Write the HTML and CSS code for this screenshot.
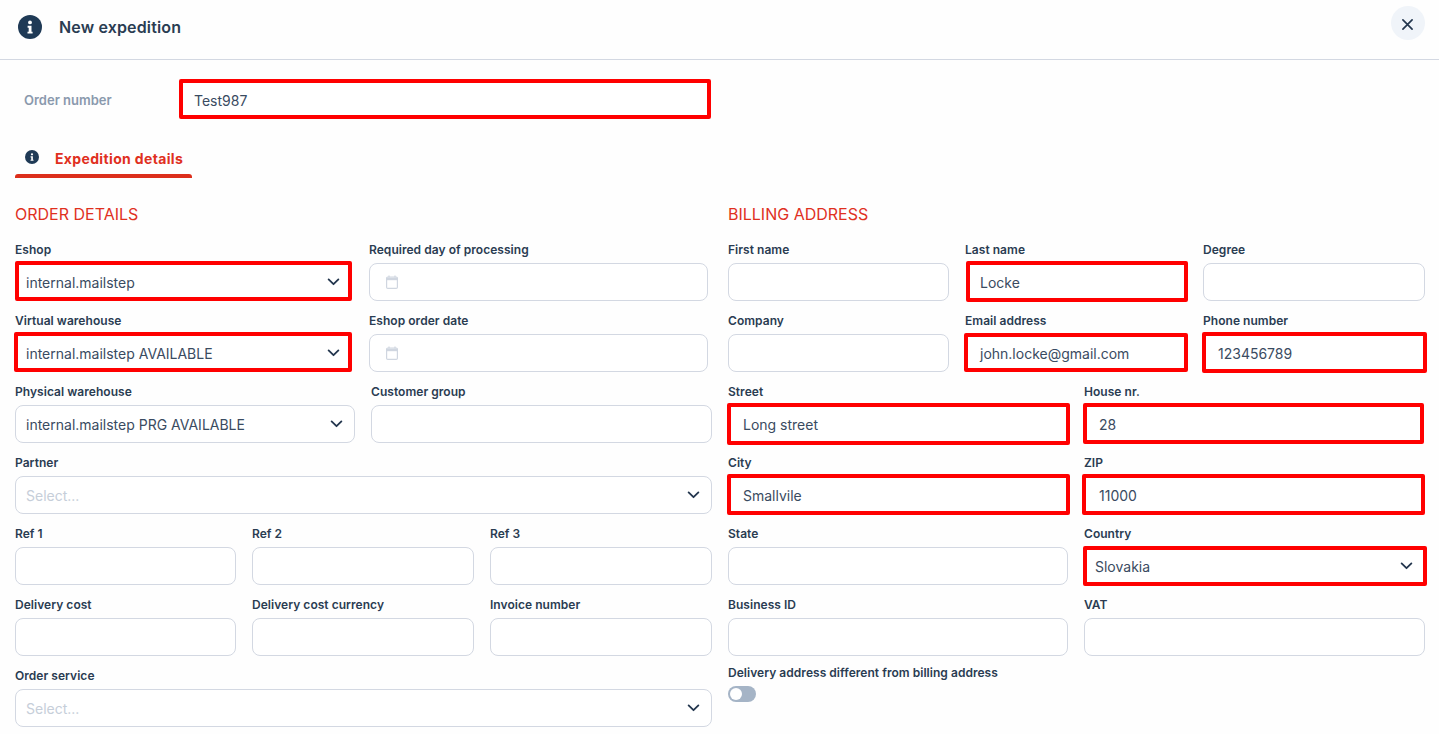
FILE: index.html
```html
<!DOCTYPE html>
<html lang="en">
<head>
    <meta charset="UTF-8">
    <meta name="viewport" content="width=device-width, initial-scale=1.0">
    <title>New expedition</title>
    <link rel="stylesheet" href="styles.css">
</head>
<body>

    <svg class="icon-defs" width="0" height="0" aria-hidden="true">
        <symbol id="chevron" viewBox="0 0 14 9">
            <path d="M1.5 1.5 7 7l5.5-5.5" fill="none" stroke="currentColor" stroke-width="2" stroke-linecap="round" stroke-linejoin="round"/>
        </symbol>
        <symbol id="calendar" viewBox="0 0 12 14">
            <path d="M3 .5v2M9 .5v2" fill="none" stroke="currentColor" stroke-width="1.2"/>
            <rect x=".6" y="2" width="10.8" height="11.4" rx="1.2" fill="none" stroke="currentColor" stroke-width="1.2"/>
            <path d="M.6 2.6h10.8v2.6H.6z" fill="currentColor"/>
        </symbol>
        <symbol id="info" viewBox="0 0 24 24">
            <circle cx="12" cy="12" r="12" fill="currentColor"/>
            <circle cx="12" cy="7.4" r="1.9" fill="#fff"/>
            <path d="M9.6 10.8h3.9v5.9h1.1v1.9H9.5v-1.9h1.2v-4H9.6z" fill="#fff"/>
        </symbol>
    </svg>

    <header class="modal-header">
        <svg class="header-icon"><use href="#info"/></svg>
        <h1>New expedition</h1>
        <button class="btn-close" type="button" aria-label="Close">
            <svg viewBox="0 0 12 12" width="11" height="11"><path d="M1 1l10 10M11 1 1 11" fill="none" stroke="currentColor" stroke-width="1.8" stroke-linecap="round"/></svg>
        </button>
    </header>

    <main class="modal-body">
        <div class="order-number">
            <label>Order number</label>
            <div class="field marked mark-order">Test987</div>
        </div>

        <nav class="tabs">
            <a class="tab">
                <svg class="tab-icon"><use href="#info"/></svg>
                Expedition details
            </a>
        </nav>

        <div class="columns">
            <section class="column">
                <h2>ORDER DETAILS</h2>

                <div class="row row-narrow">
                    <div class="group">
                        <label>Eshop</label>
                        <div class="field select marked mark-eshop">internal.mailstep <svg class="chevron"><use href="#chevron"/></svg></div>
                    </div>
                    <div class="group">
                        <label>Required day of processing</label>
                        <div class="field date"><svg class="calendar"><use href="#calendar"/></svg></div>
                    </div>
                </div>
                <div class="row row-narrow">
                    <div class="group">
                        <label>Virtual warehouse</label>
                        <div class="field select marked mark-virtual">internal.mailstep AVAILABLE <svg class="chevron"><use href="#chevron"/></svg></div>
                    </div>
                    <div class="group">
                        <label>Eshop order date</label>
                        <div class="field date"><svg class="calendar"><use href="#calendar"/></svg></div>
                    </div>
                </div>
                <div class="row row-2">
                    <div class="group">
                        <label>Physical warehouse</label>
                        <div class="field select">internal.mailstep PRG AVAILABLE <svg class="chevron"><use href="#chevron"/></svg></div>
                    </div>
                    <div class="group">
                        <label>Customer group</label>
                        <div class="field"></div>
                    </div>
                </div>
                <div class="row">
                    <div class="group">
                        <label>Partner</label>
                        <div class="field select placeholder">Select... <svg class="chevron"><use href="#chevron"/></svg></div>
                    </div>
                </div>
                <div class="row row-3">
                    <div class="group"><label>Ref 1</label><div class="field"></div></div>
                    <div class="group"><label>Ref 2</label><div class="field"></div></div>
                    <div class="group"><label>Ref 3</label><div class="field"></div></div>
                </div>
                <div class="row row-3">
                    <div class="group"><label>Delivery cost</label><div class="field"></div></div>
                    <div class="group"><label>Delivery cost currency</label><div class="field"></div></div>
                    <div class="group"><label>Invoice number</label><div class="field"></div></div>
                </div>
                <div class="row">
                    <div class="group">
                        <label>Order service</label>
                        <div class="field select placeholder">Select... <svg class="chevron"><use href="#chevron"/></svg></div>
                    </div>
                </div>
            </section>

            <section class="column">
                <h2>BILLING ADDRESS</h2>

                <div class="row row-3">
                    <div class="group"><label>First name</label><div class="field"></div></div>
                    <div class="group"><label>Last name</label><div class="field marked mark-last">Locke</div></div>
                    <div class="group"><label>Degree</label><div class="field"></div></div>
                </div>
                <div class="row row-3">
                    <div class="group"><label>Company</label><div class="field"></div></div>
                    <div class="group"><label>Email address</label><div class="field marked mark-email">john.locke@gmail.com</div></div>
                    <div class="group"><label>Phone number</label><div class="field marked mark-phone">123456789</div></div>
                </div>
                <div class="row row-2">
                    <div class="group"><label>Street</label><div class="field marked mark-street">Long street</div></div>
                    <div class="group"><label>House nr.</label><div class="field marked mark-house">28</div></div>
                </div>
                <div class="row row-2">
                    <div class="group"><label>City</label><div class="field marked mark-city">Smallvile</div></div>
                    <div class="group"><label>ZIP</label><div class="field marked mark-zip">11000</div></div>
                </div>
                <div class="row row-2">
                    <div class="group"><label>State</label><div class="field"></div></div>
                    <div class="group">
                        <label>Country</label>
                        <div class="field select marked mark-country">Slovakia <svg class="chevron"><use href="#chevron"/></svg></div>
                    </div>
                </div>
                <div class="row row-2">
                    <div class="group"><label>Business ID</label><div class="field"></div></div>
                    <div class="group"><label>VAT</label><div class="field"></div></div>
                </div>
                <div class="toggle-group">
                    <label>Delivery address different from billing address</label>
                    <span class="toggle"></span>
                </div>
            </section>
        </div>
    </main>

</body>
</html>
```

FILE: styles.css
```css
/* CSS Reset */
* {
    box-sizing: border-box;
    margin: 0;
    padding: 0;
}

body {
    font-family: Inter, "Noto Sans", sans-serif;
    background-color: #fefefe;
    color: #2a3c52;
    height: 734px;
    overflow: hidden;
}

.icon-defs {
    position: absolute;
}

/* Header */
.modal-header {
    height: 60px;
    padding: 6px 14px 0 18px;
    display: flex;
    align-items: flex-start;
    border-bottom: 1px solid #d3d8e2;
}

.header-icon {
    width: 24px;
    height: 24px;
    margin-top: 9px;
    color: #1f3a56;
}

.modal-header h1 {
    margin: 11px 0 0 17px;
    font-size: 16px;
    line-height: 20px;
    font-weight: 600;
    letter-spacing: 0.15px;
    flex: 1;
}

.btn-close {
    width: 34px;
    height: 34px;
    border: none;
    border-radius: 50%;
    background-color: #f0f4f9;
    color: #22354d;
    display: flex;
    align-items: center;
    justify-content: center;
}

.btn-close svg {
    margin: 2px 1px 0 0;
}

/* Body */
.modal-body {
    padding: 21px 14px 0 15px;
}

.order-number {
    display: flex;
    align-items: center;
    padding-left: 9px;
}

.order-number label {
    width: 155px;
    font-size: 13px;
    font-weight: 600;
    color: #8a99ad;
}

.order-number .field {
    width: 532px;
    padding-left: 13px;
}

/* Tabs */
.tabs {
    margin-top: 20px;
    display: flex;
}

.tab {
    position: relative;
    width: 177px;
    height: 39px;
    padding: 11px 0 0 10px;
    display: flex;
    align-items: flex-start;
    gap: 16px;
    font-size: 14px;
    line-height: 17px;
    font-weight: 700;
    letter-spacing: 0.35px;
    color: #e0301e;
}

.tab::after {
    content: "";
    position: absolute;
    left: 0;
    right: 0;
    bottom: 0;
    height: 4px;
    background-color: #dc2e1b;
    border-radius: 3px 3px 0 0;
}

.tab-icon {
    width: 14px;
    height: 14px;
    color: #1f3a56;
}

/* Columns */
.columns {
    margin-top: 27px;
    display: grid;
    grid-template-columns: 697px 697px;
    column-gap: 16px;
}

.column h2 {
    font-size: 16px;
    line-height: 18px;
    font-weight: 400;
    color: #e0301e;
    margin-bottom: 19px;
}

.row {
    display: grid;
    column-gap: 16px;
    margin-bottom: 12px;
}

.row-narrow {
    grid-template-columns: 337px 339px;
    column-gap: 17px;
}

.row-2 {
    grid-template-columns: 340px 341px;
}

.row-3 {
    grid-template-columns: 221px 222px 222px;
}

.group label,
.toggle-group label {
    display: block;
    height: 15px;
    margin-bottom: 6px;
    font-size: 12px;
    line-height: 15px;
    font-weight: 600;
    letter-spacing: 0.04px;
    white-space: nowrap;
}

.field {
    position: relative;
    height: 38px;
    padding: 0 10px;
    display: flex;
    align-items: center;
    font-size: 14px;
    color: #3a4b61;
    background-color: #fff;
    border: 1px solid #d3d8e2;
    border-radius: 8px;
}

/* Red annotation frames drawn over the required fields */
.field.marked {
    padding-left: 14px;
    border-color: transparent;
}

.field.select.marked {
    padding-left: 10px;
}

.marked::after {
    content: "";
    position: absolute;
    top: -3px;
    right: -1px;
    bottom: -1px;
    left: -1px;
    border: 4px solid #ff0000;
    border-radius: 2px;
    pointer-events: none;
}

.mark-virtual::after { left: -2px; }
.mark-last::after { right: -2px; bottom: -2px; left: 0; }
.mark-email::after { top: -2px; right: -2px; left: -2px; }
.mark-phone::after { right: -3px; bottom: -2px; left: -2px; }
.mark-street::after { right: -3px; bottom: -3px; left: -2px; }
.mark-house::after { right: 0; bottom: -2px; left: -2px; }
.mark-city::after { right: -3px; bottom: -2px; left: -2px; }
.mark-zip::after { bottom: -2px; left: -3px; }
.mark-country::after { top: -2px; right: -3px; bottom: -2px; left: -2px; }

.placeholder {
    color: #c6ced9;
}

.chevron {
    position: absolute;
    right: 11px;
    top: 14px;
    width: 13px;
    height: 8px;
    color: #22354d;
}

.calendar {
    width: 12px;
    height: 14px;
    margin-left: 6px;
    color: #d0d6e0;
}

/* Toggle */
.toggle-group {
    margin-top: -3px;
}

.toggle {
    display: block;
    position: relative;
    width: 28px;
    height: 16px;
    border-radius: 8px;
    background-color: #a5b4c6;
}

.toggle::after {
    content: "";
    position: absolute;
    left: 2px;
    top: 2px;
    width: 12px;
    height: 12px;
    border-radius: 50%;
    background-color: #fff;
}
```
